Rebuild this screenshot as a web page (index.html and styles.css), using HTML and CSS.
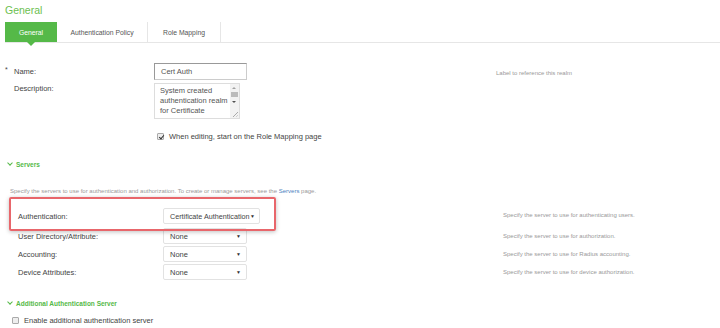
FILE: index.html
```html
<!DOCTYPE html>
<html lang="en">
<head>
    <meta charset="UTF-8">
    <title>General</title>
    <link rel="stylesheet" href="styles.css">
</head>
<body>

    <div class="page-title">General</div>

    <!-- Tabs -->
    <div class="tabs">
        <div class="tab active">General</div>
        <div class="tab tab-policy">Authentication Policy</div>
        <div class="tab tab-role">Role Mapping</div>
    </div>

    <!-- Realm info -->
    <div class="form-row row-name">
        <div class="label"><span class="req">*</span>Name:</div>
        <div class="field"><div class="text-input">Cert Auth</div></div>
        <div class="help help-name">Label to reference this realm</div>
    </div>

    <div class="form-row row-desc">
        <div class="label">Description:</div>
        <div class="field">
            <div class="textarea">
                <div class="textarea-text">System created<br>authentication realm<br>for Certificate<br>Authentication</div>
                <div class="scrollbar">
                    <span class="arrow-up"></span>
                    <span class="thumb"></span>
                    <span class="arrow-down"></span>
                    <span class="grip"></span>
                </div>
            </div>
        </div>
    </div>

    <div class="check-row row-edit">
        <span class="checkbox checked"></span>
        <span>When editing, start on the Role Mapping page</span>
    </div>

    <!-- Servers -->
    <div class="section-head head-servers"><span class="chevron"></span>Servers</div>
    <div class="section-note">Specify the servers to use for authentication and authorization. To create or manage servers, see the <a href="#">Servers</a> page.</div>

    <div class="highlight">
        <div class="server-row">
            <div class="label">Authentication:</div>
            <div class="select select-wide">Certificate Authentication <span class="caret">&#9660;</span></div>
        </div>
    </div>

    <div class="server-row row-plain">
        <div class="label">User Directory/Attribute:</div>
        <div class="select">None <span class="caret">&#9660;</span></div>
        <div class="help help-server">Specify the server to use for authorization.</div>
    </div>
    <div class="server-row row-plain">
        <div class="label">Accounting:</div>
        <div class="select">None <span class="caret">&#9660;</span></div>
        <div class="help help-server">Specify the server to use for Radius accounting.</div>
    </div>
    <div class="server-row row-plain">
        <div class="label">Device Attributes:</div>
        <div class="select">None <span class="caret">&#9660;</span></div>
        <div class="help help-server">Specify the server to use for device authorization.</div>
    </div>

    <div class="help help-auth">Specify the server to use for authenticating users.</div>

    <!-- Additional server -->
    <div class="section-head head-extra"><span class="chevron"></span>Additional Authentication Server</div>
    <div class="check-row row-extra">
        <span class="checkbox"></span>
        <span>Enable additional authentication server</span>
    </div>

</body>
</html>
```

FILE: styles.css
```css
:root {
    --green: #55b948;
    --title-green: #6cc04f;
    --text: #444444;
    --text-light: #999999;
    --border: #dddddd;
    --link: #4a7fc0;
}

* {
    margin: 0;
    padding: 0;
    box-sizing: border-box;
}

body {
    width: 720px;
    height: 328px;
    overflow: hidden;
    position: relative;
    background: #ffffff;
    font-family: 'Liberation Sans', Arial, sans-serif;
    font-size: 7.5px;
    color: var(--text);
}

.page-title {
    height: 22px;
    padding: 4px 0 0 5px;
    font-size: 10.5px;
    color: var(--title-green);
}

/* Tabs */
.tabs {
    display: flex;
    height: 21px;
    margin-left: 5px;
    border-bottom: 1px solid #e6e6e6;
}

.tab {
    display: flex;
    align-items: center;
    justify-content: center;
    height: 20px;
    border-right: 1px solid #e6e6e6;
    font-size: 6.8px;
    color: #555555;
}

.tab.active {
    position: relative;
    width: 52px;
    background: var(--green);
    color: #ffffff;
    border-right: none;
}

.tab.active::after {
    content: "";
    position: absolute;
    left: 22px;
    bottom: -4px;
    border-left: 4px solid transparent;
    border-right: 4px solid transparent;
    border-top: 4px solid var(--green);
}

.tab-policy { width: 91px; }
.tab-role { width: 73px; }

/* Form rows */
.form-row {
    display: flex;
    align-items: center;
}

.form-row .label {
    width: 154px;
    padding-left: 14px;
    position: relative;
    color: var(--text);
}

.req {
    position: absolute;
    left: 5px;
    top: -1px;
    font-size: 7px;
}

.row-name {
    margin-top: 20px;
    height: 17px;
}

.text-input {
    width: 93px;
    height: 17px;
    padding: 3px 0 0 6px;
    border: 1px solid #cccccc;
    border-top-color: #999999;
    border-left-color: #999999;
    color: #555555;
}

.help {
    font-size: 6px;
    color: var(--text-light);
}

.help-name {
    margin-left: 249px;
    margin-top: 3px;
}

.row-desc {
    align-items: flex-start;
    margin-top: 3px;
}

.row-desc .label {
    padding-top: 1px;
}

.textarea {
    display: flex;
    width: 86px;
    height: 36px;
    border: 1px solid #dddddd;
    overflow: hidden;
}

.textarea-text {
    flex: 1;
    padding: 2px 0 0 5px;
    line-height: 10px;
    color: #555555;
}

.scrollbar {
    position: relative;
    width: 9px;
    background: #f2f2f2;
}

.arrow-up, .arrow-down {
    position: absolute;
    left: 2px;
    border-left: 2.5px solid transparent;
    border-right: 2.5px solid transparent;
}

.arrow-up {
    top: 3px;
    border-bottom: 2.5px solid #a0a0a0;
}

.arrow-down {
    top: 17px;
    border-top: 2.5px solid #505050;
}

.thumb {
    position: absolute;
    left: 1px;
    top: 8px;
    width: 7px;
    height: 5px;
    background: #bbbbbb;
}

.grip {
    position: absolute;
    right: 1px;
    bottom: 1px;
    width: 5px;
    height: 5px;
    background: linear-gradient(135deg, transparent 45%, #aaaaaa 50%, transparent 60%, transparent 70%, #aaaaaa 75%, transparent 85%);
}

/* Checkbox rows */
.check-row {
    display: flex;
    align-items: center;
    gap: 5px;
}

.checkbox {
    display: inline-block;
    width: 7px;
    height: 7px;
    border: 1px solid #aaaaaa;
    border-radius: 1px;
    background: #eeeeee;
    position: relative;
}

.checkbox.checked::after {
    content: "";
    position: absolute;
    left: 1.5px;
    top: 0;
    width: 2px;
    height: 4px;
    border-right: 1.3px solid #333333;
    border-bottom: 1.3px solid #333333;
    transform: rotate(40deg);
}

.row-edit {
    margin: 12px 0 0 157px;
    height: 11px;
}

/* Sections */
.section-head {
    display: flex;
    align-items: center;
    gap: 4px;
    padding-left: 8px;
    font-size: 6.5px;
    font-weight: bold;
    color: var(--green);
}

.chevron {
    display: inline-block;
    width: 4px;
    height: 4px;
    margin-top: -3px;
    border-right: 1.5px solid var(--green);
    border-bottom: 1.5px solid var(--green);
    transform: rotate(45deg);
}

.head-servers {
    margin-top: 17px;
    height: 10px;
}

.section-note {
    margin: 19px 0 0 10px;
    font-size: 6px;
    color: var(--text-light);
}

.section-note a {
    color: var(--link);
    text-decoration: none;
}

.highlight {
    margin: 3px 0 -3px 9px;
    width: 267px;
    height: 34px;
    padding: 9px 0 0 7px;
    border: 2px solid #e8666b;
    border-radius: 2px;
    box-shadow: 0 1px 4px rgba(0, 0, 0, 0.25);
    position: relative;
    z-index: 1;
}

.server-row {
    display: flex;
    align-items: center;
    height: 16px;
}

.server-row .label {
    width: 145px;
    flex-shrink: 0;
}

.row-plain {
    padding-left: 18px;
    margin-bottom: 2px;
}

.select {
    display: flex;
    align-items: center;
    justify-content: space-between;
    flex-shrink: 0;
    width: 84px;
    height: 16px;
    padding: 0 5px 0 6px;
    border: 1px solid #e2e2e2;
    border-radius: 2px;
    background: #ffffff;
    color: #444444;
    white-space: nowrap;
}

.select-wide {
    width: 97px;
    font-size: 7.2px;
    padding-right: 4px;
}

.caret {
    font-size: 5px;
    color: #333333;
}

.help-server {
    margin-left: 256px;
}

.help-auth {
    position: absolute;
    left: 503px;
    top: 212px;
}

.head-extra {
    margin-top: 18px;
    height: 10px;
}

.row-extra {
    margin: 8px 0 0 12px;
}
```
